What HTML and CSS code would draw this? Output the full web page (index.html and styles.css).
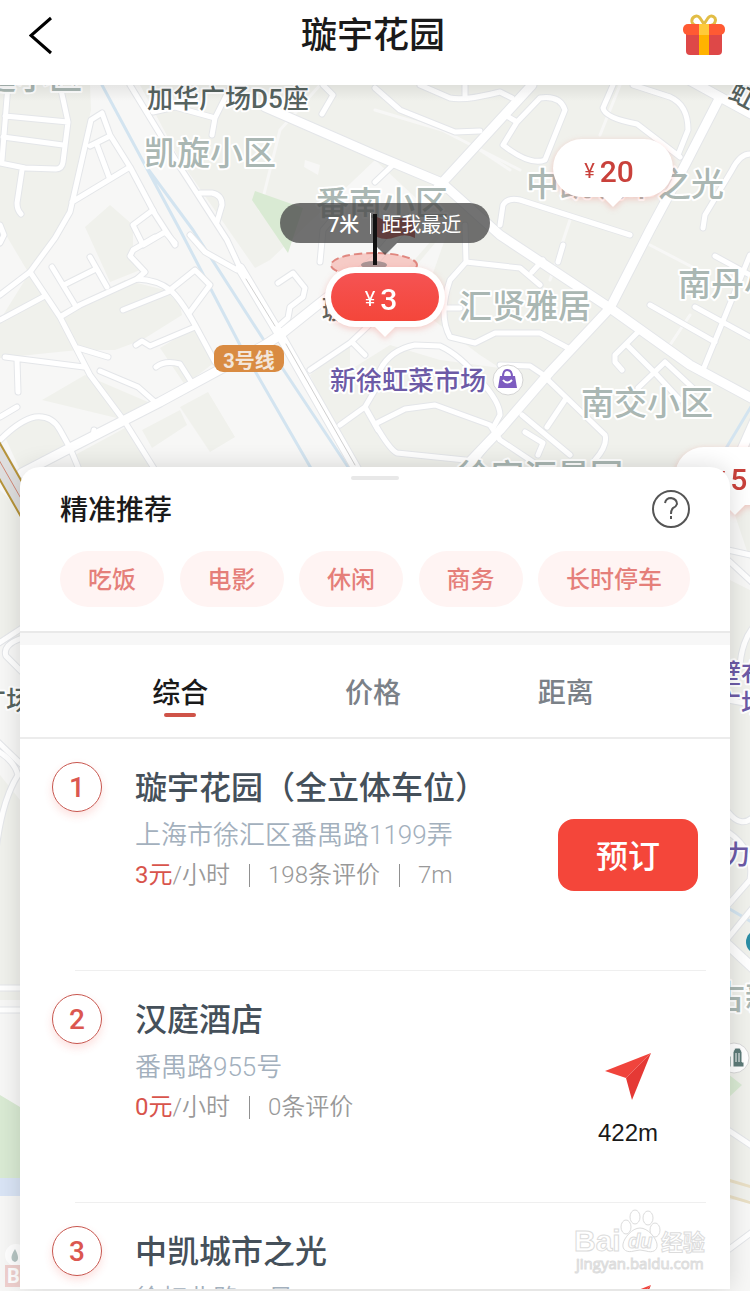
FILE: index.html
```html
<!DOCTYPE html>
<html lang="zh-CN">
<head>
<meta charset="UTF-8">
<meta name="viewport" content="width=device-width, initial-scale=1.0">
<title>璇宇花园</title>
<link rel="stylesheet" href="styles.css">
</head>
<body>
<div class="app">
    <header class="header">
        <button class="icon-btn back" type="button" aria-label="返回">
            <svg width="24" height="40" viewBox="0 0 24 40"><path d="M22 3L2 20.500L22 38" fill="none" stroke="#000" stroke-width="3"/></svg>
        </button>
        <h1 class="header-title">璇宇花园</h1>
        <button class="icon-btn" type="button" aria-label="礼物">
            <svg width="44" height="42" viewBox="0 0 44 42">
                <path d="M22 11C17 12 11 12 10 8C9 3 15 0 18 4L22 10L26 4C29 0 35 3 33 8C32 12 26 12 22 11Z" fill="none" stroke="#e2bd45" stroke-width="3"/>
                <path d="M4 17H40V37Q40 41 36 41H8Q4 41 4 37Z" fill="#de4848"/>
                <rect x="1" y="10" width="42" height="11" rx="5" fill="#ff5a33"/>
                <rect x="17" y="10" width="10" height="31" fill="#ffb300"/>
                <rect x="17" y="10" width="10" height="11" fill="#ffca3a"/>
            </svg>
        </button>
    </header>

    <main class="screen">
        <svg class="map" viewBox="0 85 750 1206" preserveAspectRatio="xMidYMin slice">
            <defs>
                <g id="minor">
                    <path d="M8 85L2 160M60 85L68 122L63 162Q62 169 56 169L25 168L0 163M5 116L68 122M3 137L63 145M22 170L17 203Q17 210 21 214"/>
                    <path d="M30 272L55 238L70 212L91 120L102 113L110 135L130 167L155 214L175 245M90 146L110 136M97 145L109 177M72 202L130 167"/>
                    <path d="M0 295L30 272L60 317L90 375L125 422L155 470M0 320L43 297M60 317L80 305L137 279Q158 280 170 290Q180 298 195 325L215 362"/>
                    <path d="M75 305L52 267M66 284L94 270M90 257L107 287M137 279L145 272L130 256L133 250L155 237M153 210L133 225L143 245L165 232L175 243"/>
                    <path d="M170 290L195 270L210 285L190 312M123 310L168 292M195 327L150 346L142 341L136 345M5 357L84 367M17 360L18 392M78 348L108 357"/>
                    <path d="M100 371L138 387L155 402M156 367Q165 360 180 364L192 383M0 440Q20 420 35 417Q52 415 60 430L70 448L78 467M0 417L17 407M93 436L94 430M0 225L4 235L0 243"/>
                    <path d="M130 85L180 167L227 240L240 268M200 193L212 193Q222 195 222 205L217 222M190 235L205 252L237 270M153 112L175 107L215 118L230 88M215 118L212 135"/>
                    <path d="M278 283L293 273L305 288L303 297L290 307L288 318L280 325M310 370L350 343L385 310M352 342L365 355M340 425L365 407L375 390M365 407L378 430"/>
                    <path d="M323 85L333 95L322 114M375 88L400 110L455 132L480 131M420 85L450 98Q465 101 500 92L512 98M465 98V85M505 115L517 122M517 122L540 98Q560 95 565 110L545 160Q530 166 503 145Z"/>
                    <path d="M613 85L603 108Q605 118 637 124L680 157M633 85L670 97Q688 105 688 130L678 155M500 225L503 205Q508 197 520 200L630 235M750 154Q740 154 732 170L705 215L703 228M395 163L375 182M320 262L323 230L340 210"/>
                    <path d="M465 225L466 262L450 280Q438 315 450 337L475 343L495 333L540 333L568 348M466 262L520 268L540 285M532 272L543 260M558 262L563 245M445 308H460"/>
                    <path d="M380 370Q390 350 415 345L440 346Q460 355 480 380Q500 402 500 415L493 428M500 365L530 366L548 378M375 424L405 409L435 405L490 425L500 440L545 470M375 424Q390 450 397 453L475 461L495 435"/>
                    <path d="M548 380L605 435Q608 445 595 460M565 400L547 427M522 415L570 455M525 432L543 443L538 455M640 330L615 355V362L622 370M627 345L655 373L680 400M638 388L665 362L695 390M703 370L750 255M650 305L715 342M695 307L750 337M715 256L750 275"/>
                    <path d="M-4 645L22 628M22 638Q2 645 6 656L22 672M-4 740L22 765M-4 750Q14 760 18 775Q2 800 -4 850M-2 988H24M-2 1010H24"/>
                    <path d="M728 550L755 556M728 560L755 585M755 625Q742 640 740 665M728 700L755 705M728 812Q742 830 755 815M728 832Q755 850 750 880L728 905M728 938L755 905M728 1130L755 1148M728 1250L755 1230"/>
                </g>
                <g id="major">
                    <path d="M22 473L72 447L160 402L265 345L280 335L315 307L375 260L442 183L532 85M240 268L280 335L357 470M265 107L375 155L442 183L500 235L610 308L690 365L755 400"/>
                    <path d="M680 75L720 97L755 116M720 97L685 165L650 230L610 308L550 372L500 430L460 472M728 945L755 970M735 465L755 420"/>
                </g>
            </defs>

            <rect class="land" x="0" y="85" width="750" height="1206"/>
            <path class="block" d="M0 85H90L91 110L68 215L28 272L0 225ZM30 272L60 317L78 350L0 358V320ZM140 85H350L520 85H750V560L730 500L560 470H350L330 420L310 375L355 340L410 265L445 225L375 160L270 260L255 268L180 160ZM60 312L125 280L165 290L180 305L182 315L142 340L115 350L80 350ZM85 227L110 205L133 225V255L140 270L110 282ZM42 400L85 375L155 405L125 420ZM160 348L195 327L215 362L185 385ZM180 407L208 392L235 437L210 452ZM142 430L180 410L187 425L152 448ZM75 455L125 428L155 470H75ZM5 437Q30 415 55 420L70 450L20 470Z"/>
            <path class="block" d="M0 490L20 510V640L0 640ZM0 775L20 800V1000H0ZM730 580L750 590V1200H730Z"/>
            <path class="path" d="M375 110L442 130L520 170M600 135L620 85M510 170L480 150M550 280L570 220M650 245L698 270M690 315L670 345M320 85L280 130L260 210"/>
            <path class="land" d="M350 345L450 225L420 310L480 355L500 368L440 360L390 345L350 370ZM305 160L320 165L318 175L304 167Z"/>
            <path class="green" d="M255 191L303 208L288 253L252 200ZM0 1095L20 1107V1178H0ZM728 1074L742 1085L728 1098Z"/>
            <rect class="water" x="0" y="1178" width="22" height="18"/>
            <path class="river" d="M102 85L145 165L193 230L267 345L350 470M145 165L180 230L240 345L312 470M755 400L725 450M728 908L755 924"/>

            <use href="#minor" class="minor-casing"/>
            <use href="#major" class="major-casing"/>
            <use href="#minor" class="minor-fill"/>
            <use href="#major" class="major-fill"/>
            <path class="rail" d="M246 279L275 326M286 344L355 465"/>

            <path d="M-8 447L32 517" fill="none" stroke="#dedede" stroke-width="20"/>
            <path d="M-2 440L38 510M-16 452L24 522" fill="none" stroke="#b69339" stroke-width="2"/>
            <path d="M-9 446L31 516" fill="none" stroke="#cf8876"/>
            <path d="M728 1180L755 1188M728 1196L755 1204" fill="none" stroke="#e9dfc5" stroke-width="3"/>

            <g class="place">
                <text x="-17" y="89">庭小区</text>
                <text x="144" y="165">凯旋小区</text>
                <text x="316" y="215">番南小区</text>
                <text x="526" y="196">中凯城市之光</text>
                <text x="459" y="318">汇贤雅居</text>
                <text x="678" y="296">南丹小区</text>
                <text x="581" y="415">南交小区</text>
                <text x="458" y="488">徐家汇景园</text>
                <text x="712" y="1009">古新</text>
            </g>
            <g class="building">
                <text x="147" y="108">加华广场D5座</text>
                <text x="-20" y="710">广场</text>
                <text x="322" y="319">璇宇花园</text>
                <text x="727" y="98" transform="rotate(28 727 98)">虹桥路</text>
            </g>
            <g class="shop">
                <text x="330" y="390">新徐虹菜市场</text>
                <text x="715" y="683">壁布</text>
                <text x="715" y="713">广场</text>
                <text x="724" y="864">力</text>
            </g>

            <circle cx="508" cy="380" r="15" fill="#fff" stroke="#d5d5d5"/>
            <path d="M500 376H515L517 388H498Z" fill="#7d5cc0"/>
            <path d="M503 377Q503 370 507 370Q512 370 512 377" fill="none" stroke="#7d5cc0" stroke-width="2"/>
            <path d="M503 380Q507 385 512 380" fill="none" stroke="#fff" stroke-width="2"/>

            <rect x="214" y="345" width="70" height="27" rx="9" fill="#d98b42"/>
            <text class="metro" x="249" y="368">3号线</text>

            <circle cx="758" cy="942" r="12" fill="#2b8ea5"/>
            <circle cx="734" cy="1058" r="15" fill="#fff" stroke="#d8d8d8"/>
            <path d="M725 1056H731V1067H725ZM733 1052L735 1048H740L742 1052V1062H744V1067H733ZM736 1053V1062M739 1053V1062" fill="#5d7a78" stroke="#fff"/>
            <circle cx="16" cy="1255" r="11" fill="#fff"/>
            <path d="M15 1249Q8 1260 15 1262Q21 1260 15 1249Z" fill="#b6c5c3"/>
            <rect x="5" y="1265" width="18" height="22" fill="#efd0ce"/>
            <text class="gate" x="7" y="1283">B</text>
        </svg>

        <div class="price-pin pin-20"><small>¥</small>20</div>
        <div class="price-pin pin-5"><small>¥</small>5</div>

        <svg class="spot" width="92" height="74" viewBox="0 0 92 74">
            <path d="M47 6Q56 11 66 8Q76 5 85 10V27Q76 22 66 26Q56 30 47 26Z" fill="#b3241f"/>
            <ellipse cx="44" cy="54" rx="43" ry="12" fill="#f5b8b2" fill-opacity=".7" stroke="#e0877f" stroke-width="2" stroke-dasharray="8 4"/>
            <ellipse cx="44" cy="54" rx="13" ry="4" fill="#a89595"/>
        </svg>
        <div class="tooltip"><b>7米</b><i></i><span>距我最近</span></div>
        <div class="pole"></div>
        <div class="price-pin pin-active"><div class="pin-body"><small>¥</small>3</div></div>

        <section class="sheet">
            <div class="handle"></div>
            <div class="recommend">
                <div class="recommend-head">
                    <h2>精准推荐</h2>
                    <button class="help" type="button" aria-label="帮助">
                        <svg width="38" height="38" viewBox="0 0 38 38" fill="none" stroke="#555">
                            <circle cx="19" cy="19" r="18" stroke-width="2"/>
                            <path d="M13 13Q14 8 19 8Q25 9 25 14Q24 17 21 18Q19 20 19 24" stroke-width="2"/>
                            <path d="M19 26V29" stroke-width="2"/>
                        </svg>
                    </button>
                </div>
                <div class="chips">
                    <button type="button">吃饭</button>
                    <button type="button">电影</button>
                    <button type="button">休闲</button>
                    <button type="button">商务</button>
                    <button type="button">长时停车</button>
                </div>
            </div>

            <nav class="tabs">
                <button class="tab active" type="button">综合</button>
                <button class="tab" type="button">价格</button>
                <button class="tab" type="button">距离</button>
            </nav>

            <ol class="list">
                <li class="item">
                    <span class="rank">1</span>
                    <div class="info">
                        <h3>璇宇花园（全立体车位）</h3>
                        <p class="address">上海市徐汇区番禺路1199弄</p>
                        <p class="meta"><em>3元</em>/小时<i></i>198条评价<i></i>7m</p>
                    </div>
                    <div class="action">
                        <button class="book" type="button">预订</button>
                    </div>
                </li>
                <li class="item">
                    <span class="rank">2</span>
                    <div class="info">
                        <h3>汉庭酒店</h3>
                        <p class="address">番禺路955号</p>
                        <p class="meta"><em>0元</em>/小时<i></i>0条评价</p>
                    </div>
                    <div class="action">
                        <a class="navigate" href="#">
                            <svg width="48" height="52" viewBox="0 0 48 52"><path d="M47 2L1 20L22 27Z" fill="#f0443c"/><path d="M47 2L22 27L28 49Z" fill="#e53935"/></svg>
                            <span>422m</span>
                        </a>
                    </div>
                </li>
                <li class="item">
                    <span class="rank">3</span>
                    <div class="info">
                        <h3>中凯城市之光</h3>
                        <p class="address">徐虹北路99号</p>
                    </div>
                    <div class="action">
                        <a class="navigate" href="#" aria-label="导航">
                            <svg width="48" height="52" viewBox="0 0 48 52"><path d="M47 2L1 20L22 27Z" fill="#f0443c"/><path d="M47 2L22 27L28 49Z" fill="#e53935"/></svg>
                        </a>
                    </div>
                </li>
            </ol>
        </section>

        <svg class="watermark" width="140" height="70" viewBox="0 0 140 70">
            <text class="wm-logo" x="1" y="44">Bai</text>
            <ellipse cx="53" cy="20" rx="5" ry="7"/>
            <ellipse cx="62" cy="10" rx="5" ry="7"/>
            <ellipse cx="75" cy="11" rx="5" ry="7"/>
            <ellipse cx="82" cy="23" rx="5" ry="7"/>
            <path d="M67 21C75 21 83 31 84 37C85 44 79 46 73 44Q67 42 61 44C54 46 49 43 50 37C51 31 59 21 67 21Z"/>
            <text class="wm-du" x="55" y="41">du</text>
            <text class="wm-cn" x="88" y="43">经验</text>
            <text class="wm-url" x="3" y="62">jingyan.baidu.com</text>
        </svg>
    </main>
</div>
</body>
</html>
```
FILE: styles.css
```css
* {
    box-sizing: border-box;
}

body {
    margin: 0;
    font-family: Roboto, "Noto Sans CJK SC", sans-serif;
    color: #1a1a1a;
    background-color: #ffffff;
}

h1, h2, h3, p, ol {
    margin: 0;
    padding: 0;
}

button {
    border: none;
    padding: 0;
    background: none;
    font-family: inherit;
    cursor: pointer;
}

svg {
    display: block;
}

.app {
    height: 100vh;
    display: flex;
    flex-direction: column;
    overflow: hidden;
}

/* header */
.header {
    display: flex;
    justify-content: space-between;
    align-items: center;
    height: 85px;
    padding: 0 24px 16px 29px;
    background-color: #ffffff;
}

.icon-btn {
    display: flex;
}

.icon-btn.back {
    padding-right: 11px;
}

.header-title {
    padding-top: 3px;
    font-size: 36px;
    line-height: 50px;
    font-weight: 500;
}

/* map */
.screen {
    flex: 1;
    min-height: 0;
    position: relative;
    overflow: hidden;
    display: flex;
    flex-direction: column;
}

.screen::before {
    content: "";
    position: absolute;
    z-index: 1;
    top: 0;
    left: 0;
    right: 0;
    height: 16px;
    background: linear-gradient(rgba(0, 0, 0, 0.07), rgba(0, 0, 0, 0));
}

.map {
    position: absolute;
    top: 0;
    left: 0;
    width: 100%;
    height: 100%;
}

.land { fill: #f7f7f6; }
.block { fill: #f0f1ec; }
.green { fill: #d9ead3; }
.water { fill: #d9e4f5; }

.path, .river, .rail,
.minor-casing, .minor-fill,
.major-casing, .major-fill {
    fill: none;
    stroke-linecap: round;
    stroke-linejoin: round;
}

.path { stroke: #f7f7f6; stroke-width: 3; }
.river { stroke: #d3e4f0; stroke-width: 3; }
.rail { stroke: #d0d0d0; stroke-width: 1; }
.minor-casing { stroke: #e4e6e9; stroke-width: 7; }
.minor-fill { stroke: #ffffff; stroke-width: 5; }
.major-casing { stroke: #e4e6e9; stroke-width: 11; }
.major-fill { stroke: #ffffff; stroke-width: 9; }

.place text, .building text, .shop text {
    stroke: #ffffff;
    stroke-width: 4px;
    stroke-linejoin: round;
    paint-order: stroke;
}

.place { font-size: 33px; fill: #aab7b3; }
.building { font-size: 26px; fill: #56635f; }
.shop { font-size: 26px; fill: #6c5aa6; }

.place, .building, .shop {
    font-weight: 500;
}

.metro {
    font-size: 20px;
    font-weight: 700;
    fill: #f3e6da;
    text-anchor: middle;
}

.gate {
    font-size: 20px;
    font-weight: 700;
    fill: #ffffff;
}

/* pins */
.price-pin {
    position: absolute;
    width: 120px;
    height: 58px;
    display: flex;
    justify-content: center;
    align-items: center;
    gap: 5px;
    padding: 6px 8px 0 0;
    border-radius: 30px;
    background-color: #ffffff;
    color: #c9413b;
    font-size: 30px;
    font-weight: 500;
    filter: drop-shadow(0 2px 3px rgba(240, 70, 60, 0.25));
}

.price-pin::after {
    content: "";
    position: absolute;
    top: 100%;
    left: 50%;
    margin: -2px 0 0 -12px;
    border: 12px solid transparent;
    border-top-color: #ffffff;
    border-bottom: none;
}

.price-pin small {
    font-size: 20px;
    font-weight: 400;
}

.pin-20 {
    top: 54px;
    left: 553px;
}

.pin-5 {
    top: 362px;
    left: 675px;
}

.pin-active {
    top: 182px;
    left: 325px;
    height: 60px;
    padding: 6px;
}

.pin-body {
    flex: 1;
    height: 48px;
    display: flex;
    justify-content: center;
    align-items: center;
    gap: 5px;
    padding: 4px 8px 0 0;
    border-radius: 24px;
    background: linear-gradient(#f55353, #f4463a);
    color: #ffffff;
}

.spot {
    position: absolute;
    top: 126px;
    left: 330px;
}

.tooltip {
    position: absolute;
    top: 118px;
    left: 280px;
    width: 210px;
    height: 40px;
    padding-left: 48px;
    display: flex;
    align-items: center;
    border-radius: 20px;
    background-color: rgba(70, 70, 70, 0.76);
    color: #ffffff;
    font-size: 20px;
}

.tooltip::after {
    content: "";
    position: absolute;
    top: 100%;
    left: 50%;
    margin-left: -12px;
    border: 12px solid transparent;
    border-top-color: rgba(70, 70, 70, 0.76);
    border-bottom: none;
}

.tooltip b {
    font-weight: 500;
}

.tooltip i {
    width: 1px;
    height: 21px;
    margin: 0 10px 0 11px;
    background-color: #ffffff;
}

.pole {
    position: absolute;
    top: 129px;
    left: 373px;
    width: 4px;
    height: 51px;
    background-color: #111111;
}

/* bottom sheet */
.sheet {
    position: relative;
    flex: 1;
    min-height: 0;
    margin: 382px 20px 2px;
    overflow: hidden;
    border-radius: 20px 20px 0 0;
    background-color: #ffffff;
    box-shadow: 0 0 24px rgba(0, 0, 0, 0.14);
}

.handle {
    width: 48px;
    height: 4px;
    margin: 9px auto 0;
    border-radius: 2px;
    background-color: #e8e8e8;
}

.recommend {
    padding: 10px 40px 24px;
    border-bottom: 2px solid #e9e9e9;
}

.recommend-head {
    display: flex;
    justify-content: space-between;
    align-items: center;
    margin-bottom: 23px;
}

.recommend-head h2 {
    padding-top: 4px;
    font-size: 28px;
    line-height: 34px;
    font-weight: 500;
}

.chips {
    display: flex;
    justify-content: space-between;
}

.chips button {
    height: 56px;
    padding: 0 28px 4px;
    border-radius: 28px;
    background-color: #fff4f3;
    color: #e57f7a;
    font-size: 24px;
    font-weight: 500;
}

.tabs {
    display: flex;
    padding: 0 68px 0 64px;
    border-top: 12px solid #f7f7f7;
    border-bottom: 2px solid #ececec;
}

.tab {
    position: relative;
    flex: 1;
    height: 92px;
    color: #7b8188;
    font-size: 28px;
    font-weight: 500;
}

.tab.active {
    color: #1a1a1a;
}

.tab.active::after {
    content: "";
    position: absolute;
    left: 50%;
    bottom: 20px;
    width: 32px;
    height: 4px;
    margin-left: -16px;
    border-radius: 2px;
    background-color: #cf5348;
}

.list {
    list-style: none;
}

.item {
    position: relative;
    display: flex;
    align-items: flex-start;
    height: 232px;
    padding: 23px 32px 0;
}

.item::after {
    content: "";
    position: absolute;
    left: 55px;
    right: 24px;
    bottom: 0;
    height: 1px;
    background-color: #efefef;
}

.rank {
    width: 50px;
    height: 50px;
    margin-right: 33px;
    border: 1px solid #c8564e;
    border-radius: 50%;
    box-shadow: 0 4px 8px rgba(244, 67, 54, 0.16);
    color: #db5750;
    font-size: 28px;
    line-height: 50px;
    font-weight: 500;
    text-align: center;
}

.info {
    flex: 1;
    min-width: 0;
    white-space: nowrap;
}

.info h3 {
    color: #45505a;
    font-size: 32px;
    line-height: 52px;
    font-weight: 500;
}

.address {
    color: #a3b0bd;
    font-size: 26px;
    line-height: 42px;
    font-weight: 350;
}

.meta {
    display: flex;
    align-items: center;
    color: #999999;
    font-size: 24px;
    line-height: 38px;
    font-weight: 350;
}

.meta em {
    color: #d8544c;
    font-style: normal;
    font-weight: 400;
}

.meta i {
    width: 1px;
    height: 23px;
    margin: 0 18px 0 19px;
    background-color: #909090;
}

.action {
    width: 140px;
    padding-top: 57px;
}

.book {
    width: 100%;
    height: 72px;
    padding-bottom: 2px;
    border-radius: 16px;
    background-color: #f4463a;
    color: #ffffff;
    font-size: 32px;
    font-weight: 500;
}

.navigate {
    display: flex;
    flex-direction: column;
    align-items: center;
    gap: 16px;
    color: #1a1a1a;
    font-family: "Liberation Sans", Arial, sans-serif;
    font-size: 24px;
    line-height: 28px;
    text-decoration: none;
}

/* watermark */
.watermark {
    position: absolute;
    right: 37px;
    bottom: 14px;
    fill: #ffffff;
    stroke: #dcdcdc;
    stroke-width: 1;
    font-weight: 700;
}

.wm-logo { font: 700 30px "Liberation Sans", Arial, sans-serif; }
.wm-du { font: italic 700 20px "Liberation Sans", Arial, sans-serif; }
.wm-cn { font-size: 22px; }
.wm-url { font: 400 15px "Open Sans", sans-serif; }
```
